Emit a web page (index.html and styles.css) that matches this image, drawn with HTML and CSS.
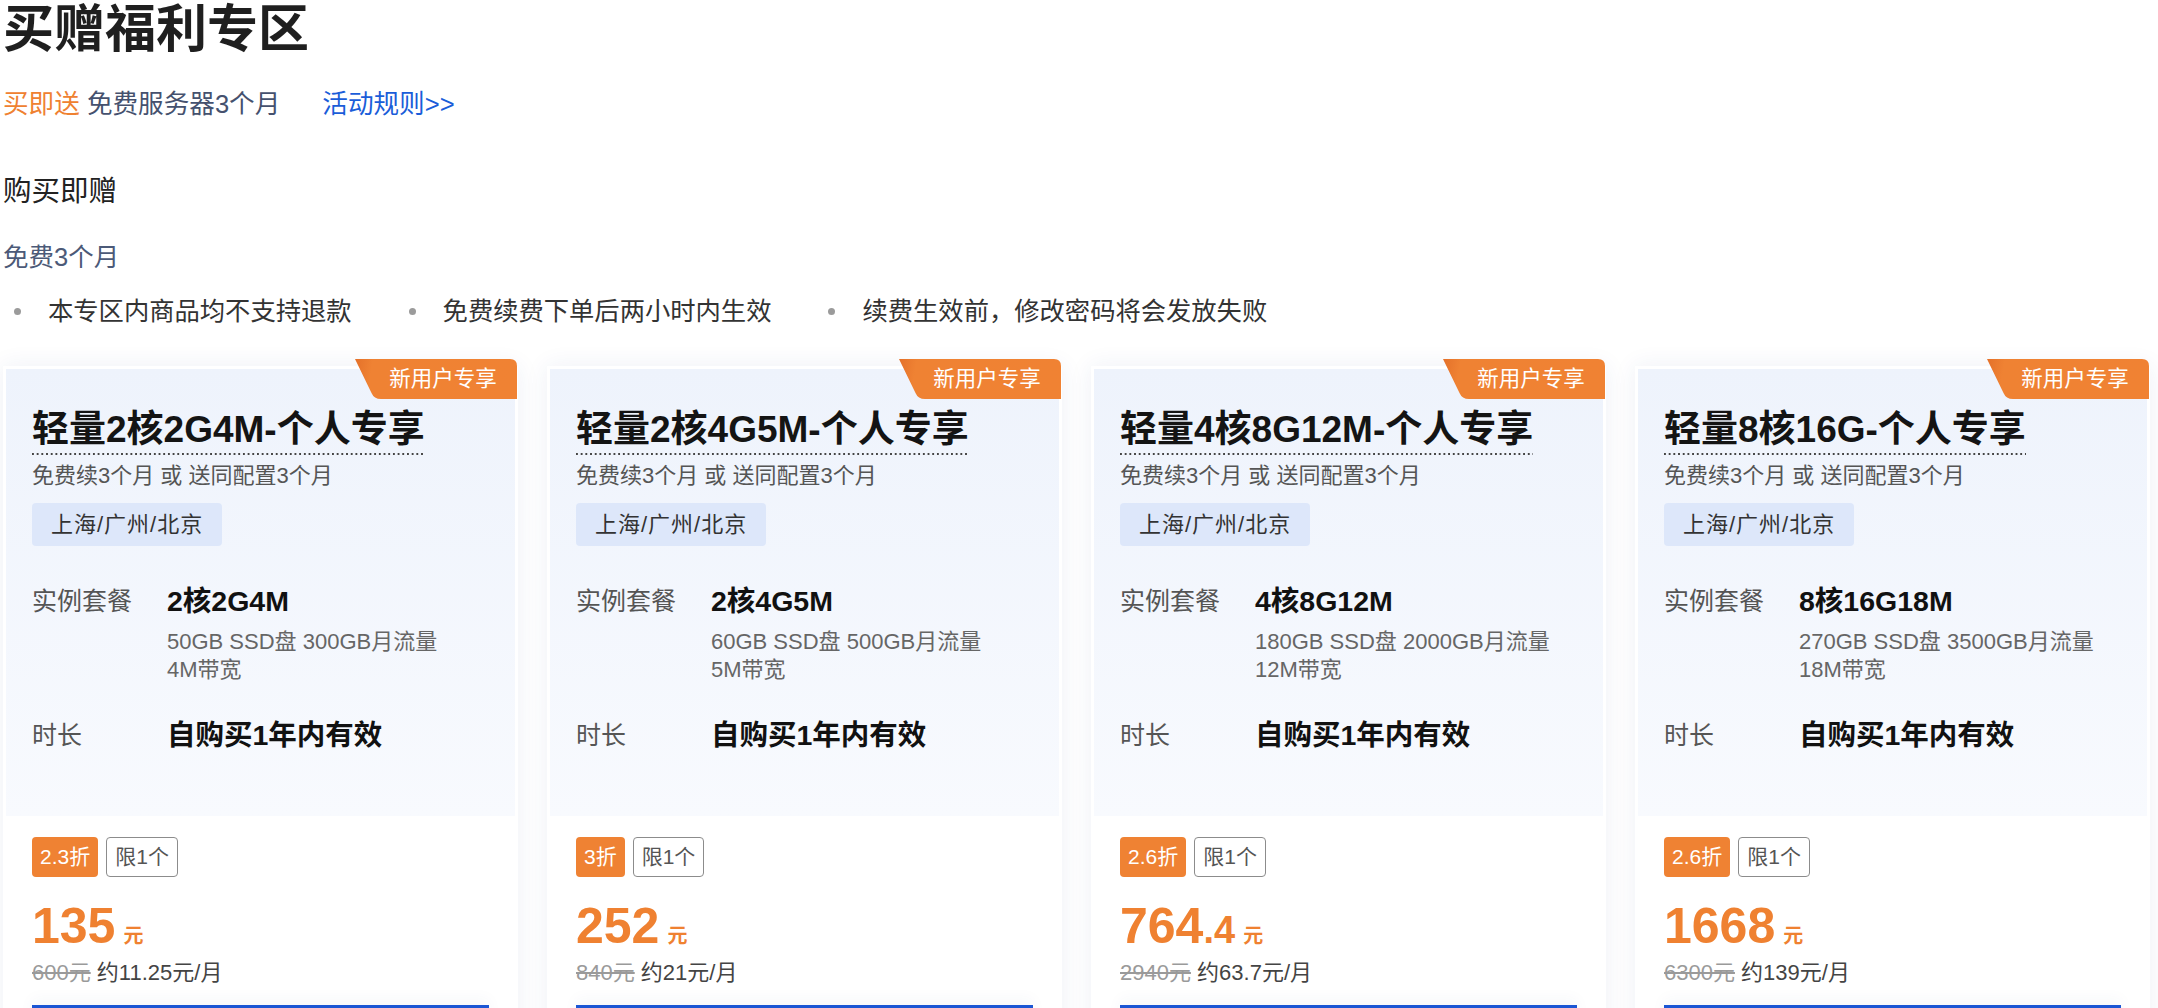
FILE: index.html
```html
<!DOCTYPE html>
<html lang="zh-CN">
<head>
<meta charset="utf-8">
<title>买赠福利专区</title>
<link rel="stylesheet" href="styles.css">
</head>
<body>
<div class="page">
  <h1 class="page-title">买赠福利专区</h1>
  <div class="promo">
    <span class="promo-tag">买即送</span> <span class="promo-desc">免费服务器3个月</span><a class="rules" href="#">活动规则&gt;&gt;</a>
  </div>
  <h2 class="section-title">购买即赠</h2>
  <div class="section-sub">免费3个月</div>
  <ul class="notes">
    <li>本专区内商品均不支持退款</li>
    <li>免费续费下单后两小时内生效</li>
    <li>续费生效前，修改密码将会发放失败</li>
  </ul>

  <div class="cards">
    <div class="card">
      <div class="ribbon">新用户专享</div>
      <div class="card-top">
        <div class="card-title">轻量2核2G4M-个人专享</div>
        <div class="card-sub">免费续3个月 或 送同配置3个月</div>
        <div class="region">上海/广州/北京</div>
        <div class="row row-spec">
          <div class="label">实例套餐</div>
          <div class="value-col">
            <div class="value">2核2G4M</div>
            <div class="specs">50GB SSD盘 300GB月流量<br>4M带宽</div>
          </div>
        </div>
        <div class="row row-time">
          <div class="label">时长</div>
          <div class="value">自购买1年内有效</div>
        </div>
      </div>
      <div class="card-bottom">
        <div class="badges"><span class="badge-discount">2.3折</span><span class="badge-limit">限1个</span></div>
        <div class="price"><span class="price-int">135</span><span class="price-unit">元</span></div>
        <div class="orig"><span class="orig-price">600元</span> <span class="monthly">约11.25元/月</span></div>
        <div class="buy-btn"></div>
      </div>
    </div>

    <div class="card">
      <div class="ribbon">新用户专享</div>
      <div class="card-top">
        <div class="card-title">轻量2核4G5M-个人专享</div>
        <div class="card-sub">免费续3个月 或 送同配置3个月</div>
        <div class="region">上海/广州/北京</div>
        <div class="row row-spec">
          <div class="label">实例套餐</div>
          <div class="value-col">
            <div class="value">2核4G5M</div>
            <div class="specs">60GB SSD盘 500GB月流量<br>5M带宽</div>
          </div>
        </div>
        <div class="row row-time">
          <div class="label">时长</div>
          <div class="value">自购买1年内有效</div>
        </div>
      </div>
      <div class="card-bottom">
        <div class="badges"><span class="badge-discount">3折</span><span class="badge-limit">限1个</span></div>
        <div class="price"><span class="price-int">252</span><span class="price-unit">元</span></div>
        <div class="orig"><span class="orig-price">840元</span> <span class="monthly">约21元/月</span></div>
        <div class="buy-btn"></div>
      </div>
    </div>

    <div class="card">
      <div class="ribbon">新用户专享</div>
      <div class="card-top">
        <div class="card-title">轻量4核8G12M-个人专享</div>
        <div class="card-sub">免费续3个月 或 送同配置3个月</div>
        <div class="region">上海/广州/北京</div>
        <div class="row row-spec">
          <div class="label">实例套餐</div>
          <div class="value-col">
            <div class="value">4核8G12M</div>
            <div class="specs">180GB SSD盘 2000GB月流量<br>12M带宽</div>
          </div>
        </div>
        <div class="row row-time">
          <div class="label">时长</div>
          <div class="value">自购买1年内有效</div>
        </div>
      </div>
      <div class="card-bottom">
        <div class="badges"><span class="badge-discount">2.6折</span><span class="badge-limit">限1个</span></div>
        <div class="price"><span class="price-int">764</span><span class="price-dec">.4</span><span class="price-unit">元</span></div>
        <div class="orig"><span class="orig-price">2940元</span> <span class="monthly">约63.7元/月</span></div>
        <div class="buy-btn"></div>
      </div>
    </div>

    <div class="card">
      <div class="ribbon">新用户专享</div>
      <div class="card-top">
        <div class="card-title">轻量8核16G-个人专享</div>
        <div class="card-sub">免费续3个月 或 送同配置3个月</div>
        <div class="region">上海/广州/北京</div>
        <div class="row row-spec">
          <div class="label">实例套餐</div>
          <div class="value-col">
            <div class="value">8核16G18M</div>
            <div class="specs">270GB SSD盘 3500GB月流量<br>18M带宽</div>
          </div>
        </div>
        <div class="row row-time">
          <div class="label">时长</div>
          <div class="value">自购买1年内有效</div>
        </div>
      </div>
      <div class="card-bottom">
        <div class="badges"><span class="badge-discount">2.6折</span><span class="badge-limit">限1个</span></div>
        <div class="price"><span class="price-int">1668</span><span class="price-unit">元</span></div>
        <div class="orig"><span class="orig-price">6300元</span> <span class="monthly">约139元/月</span></div>
        <div class="buy-btn"></div>
      </div>
    </div>
  </div>
</div>
</body>
</html>
```

FILE: styles.css
```css
* { box-sizing: border-box; }

html, body {
  margin: 0;
  padding: 0;
  background: #ffffff;
}

body {
  font-family: "Liberation Sans", "Noto Sans CJK SC", sans-serif;
  color: #333333;
  overflow: hidden;
}

.page {
  padding: 0 8px 0 3px;
}

.page-title {
  margin: 0;
  font-size: 51px;
  line-height: 60px;
  font-weight: 700;
  color: #1f1f1f;
}

.promo {
  margin-top: 26px;
  font-size: 25.6px;
  line-height: 36px;
  white-space: nowrap;
}

.promo-tag { color: #ef8131; }
.promo-desc { color: #45516e; }

.rules {
  margin-left: 42px;
  color: #1a5dd9;
  text-decoration: none;
}

.section-title {
  margin: 49px 0 0;
  font-size: 28.5px;
  line-height: 40px;
  font-weight: 400;
  color: #222222;
}

.section-sub {
  margin-top: 28px;
  font-size: 25.5px;
  line-height: 36px;
  color: #4c5a78;
}

.notes {
  display: flex;
  margin: 18px 0 0;
  padding: 0;
  list-style: none;
  font-size: 25.3px;
  line-height: 36px;
  color: #333333;
}

.notes li {
  position: relative;
  padding-left: 45px;
  margin-right: 46px;
  white-space: nowrap;
}

.notes li::before {
  content: "";
  position: absolute;
  left: 11px;
  top: 15px;
  width: 7px;
  height: 7px;
  border-radius: 50%;
  background: #9b9b9b;
}

.cards {
  display: grid;
  grid-template-columns: repeat(4, 515px);
  column-gap: 29px;
  margin-top: 37px;
}

.card {
  position: relative;
  background: #ffffff;
  padding: 3px;
  box-shadow: 0 0 22px rgba(40, 70, 140, 0.08);
}

.ribbon {
  position: absolute;
  top: -7px;
  right: 1px;
  width: 162px;
  height: 40px;
  padding-left: 14px;
  display: flex;
  align-items: center;
  justify-content: center;
  font-size: 21.5px;
  line-height: 40px;
  color: #ffffff;
  background: linear-gradient(100deg, #e4712a 0px, #ef8233 18px, #f08233 100%);
  clip-path: path("M0 0 H155 Q162 0 162 7 V40 H26 Q19 40 16.5 34 Z");
}

.card-top {
  padding: 39px 26px 61px;
  background: linear-gradient(180deg, #eef3fc 0%, #f8fafe 100%);
}

.card-title {
  width: fit-content;
  font-size: 37px;
  line-height: 44px;
  font-weight: 700;
  color: #141414;
  padding-bottom: 4px;
  background-image: linear-gradient(90deg, #444 1.6px, transparent 1.6px);
  background-size: 4.7px 1.6px;
  background-repeat: repeat-x;
  background-position: left bottom 1px;
  white-space: nowrap;
}

.card-sub {
  margin-top: 5px;
  font-size: 22px;
  line-height: 30px;
  color: #555555;
  white-space: nowrap;
}

.region {
  display: inline-block;
  margin-top: 12px;
  height: 43px;
  padding: 0 19px;
  font-size: 22px;
  line-height: 43px;
  letter-spacing: 1px;
  color: #333333;
  background: #dde7fa;
  border-radius: 4px;
}

.row {
  display: flex;
}

.row-spec { margin-top: 35px; }
.row-time { margin-top: 31px; }

.label {
  flex: 0 0 135px;
  font-size: 25px;
  line-height: 40px;
  color: #555555;
}

.value {
  font-size: 28.5px;
  line-height: 40px;
  font-weight: 700;
  color: #111111;
  white-space: nowrap;
}

.specs {
  margin-top: 7px;
  font-size: 22px;
  line-height: 28px;
  color: #666666;
  white-space: nowrap;
}

.card-bottom {
  padding: 21px 26px 0;
}

.badges {
  display: flex;
  gap: 8px;
}

.badge-discount,
.badge-limit {
  height: 40px;
  padding: 0 8px;
  font-size: 21px;
  line-height: 40px;
  border-radius: 4px;
}

.badge-discount {
  background: #ef8233;
  color: #ffffff;
}

.badge-limit {
  border: 1px solid #8c8c8c;
  line-height: 38px;
  color: #555555;
}

.price {
  margin-top: 23px;
  height: 52px;
  line-height: 52px;
  color: #ef8131;
  white-space: nowrap;
}

.price-int {
  font-size: 50px;
  font-weight: 700;
}

.price-dec {
  font-size: 38px;
  font-weight: 700;
}

.price-unit {
  margin-left: 8px;
  font-size: 20px;
  font-weight: 700;
}

.orig {
  margin-top: 6px;
  font-size: 22px;
  line-height: 30px;
  white-space: nowrap;
}

.orig-price {
  color: #9a9a9a;
  text-decoration: line-through;
}

.monthly {
  color: #444444;
}

.buy-btn {
  margin-top: 17px;
  height: 60px;
  background: #1b56d4;
  box-shadow: 0 -6px 14px rgba(40, 70, 140, 0.04);
}
```
